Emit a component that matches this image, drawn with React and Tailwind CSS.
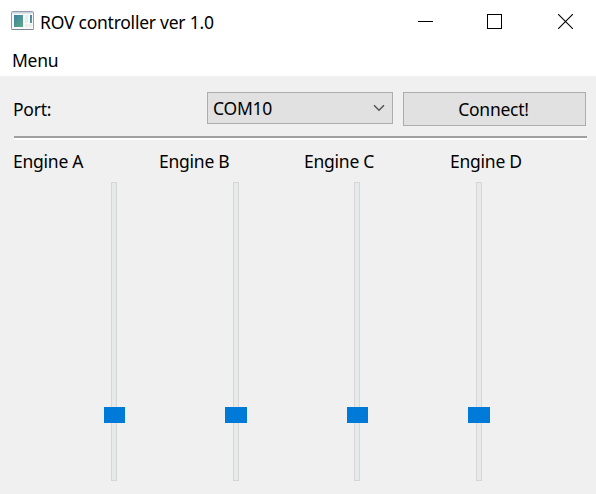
const engines = [
  { name: "A", label: "w-[146px]", slider: "w-[21px]", groove: "ml-[7px]" },
  { name: "B", label: "w-[145px]", slider: "w-[22px]", groove: "ml-[8px]" },
  { name: "C", label: "w-[146px]", slider: "w-[21px]", groove: "ml-[7px]" },
  { name: "D", label: "w-[130px]", slider: "w-[22px]", groove: "ml-[8px]" },
];

function AppIcon() {
  return (
    <svg width="23" height="20" viewBox="0 0 23 20" className="shrink-0">
      <defs>
        <linearGradient id="pane" x1="0" y1="0" x2="1" y2="1">
          <stop offset="0" stopColor="#3f7fa6" />
          <stop offset="1" stopColor="#5cab80" />
        </linearGradient>
      </defs>
      <rect x="0.5" y="0.5" width="22" height="18" rx="1" fill="#f8f9fa" stroke="#929ba6" />
      <rect x="1" y="1" width="21" height="1.5" fill="#c9d2de" />
      <path d="M0.5 18.5H22.5" stroke="#7e8791" />
      <rect x="3" y="4" width="9" height="12" fill="url(#pane)" />
      <rect x="14" y="4" width="3" height="8" fill="#ececec" />
      <rect x="14" y="13" width="7" height="3" fill="#eeeeee" />
      <rect x="19" y="4" width="2" height="8" fill="url(#pane)" />
    </svg>
  );
}

function TitleBar() {
  return (
    <header className="flex h-[44px] items-start bg-white pl-[11px]">
      <div className="flex h-[42px] items-center">
        <AppIcon />
      </div>
      <h1 className="ml-[6px] mt-[10px] w-[378px] tracking-[-0.24px]">ROV controller ver 1.0</h1>
      <svg width="15" height="15" className="mt-[14px]" shapeRendering="crispEdges">
        <rect y="7" width="15" height="1" />
      </svg>
      <svg width="15" height="15" className="ml-[54px] mt-[14px]" shapeRendering="crispEdges">
        <rect x="0.5" y="0.5" width="14" height="14" fill="none" stroke="black" />
      </svg>
      <svg width="15" height="15" className="ml-[56px] mt-[14px]">
        <path d="M0 0L15 15M15 0L0 15" stroke="black" strokeWidth="1.1" />
      </svg>
    </header>
  );
}

export default function App() {
  return (
    <div
      className="flex h-[494px] w-[596px] flex-col overflow-hidden bg-[#f0f0f0] text-[17.5px] leading-[24px] tracking-[-0.25px] text-black"
      style={{ fontFamily: '"Noto Sans", sans-serif' }}
    >
      <TitleBar />
      <nav className="h-8 bg-white pl-[12px] pt-[4px]">Menu</nav>

      <section className="flex h-[60px] items-start pl-[13px] pt-[16px]">
        <label className="mt-[5px] w-[194px]">Port:</label>
        <button className="flex h-[32px] w-[186px] items-center justify-between border border-[#adadad] bg-[#e1e1e1] pl-[5px] pr-[7px]">
          <span className="-mt-px">COM10</span>
          <svg width="12" height="8" viewBox="0 0 12 8" fill="none" stroke="#555555" strokeWidth="1.5">
            <path d="M1 1.2L6 6.2L11 1.2" />
          </svg>
        </button>
        <button className="ml-[10px] h-[34px] w-[183px] border border-[#adadad] bg-[#e1e1e1] pb-px pr-[2px] text-center">
          Connect!
        </button>
      </section>

      <div className="ml-[14px] h-[4px] w-[573px] shrink-0 border-b-2 border-t-2 border-b-white border-t-[#a0a0a0]" />

      <section className="flex h-[42px] pl-[13px] pt-[9px]">
        {engines.map((engine) => (
          <div key={engine.name} className={engine.label}>
            Engine {engine.name}
          </div>
        ))}
      </section>

      <section className="flex h-[299px] gap-[100px] pl-[104px]">
        {engines.map((engine) => (
          <div key={engine.name} className={`relative h-full ${engine.slider}`}>
            <div className={`h-full w-[6px] border border-[#d6d6d6] bg-[#e7eaea] ${engine.groove}`} />
            <div className="absolute left-0 top-[225px] h-[16px] w-full bg-[#007ad9]" />
          </div>
        ))}
      </section>
    </div>
  );
}
